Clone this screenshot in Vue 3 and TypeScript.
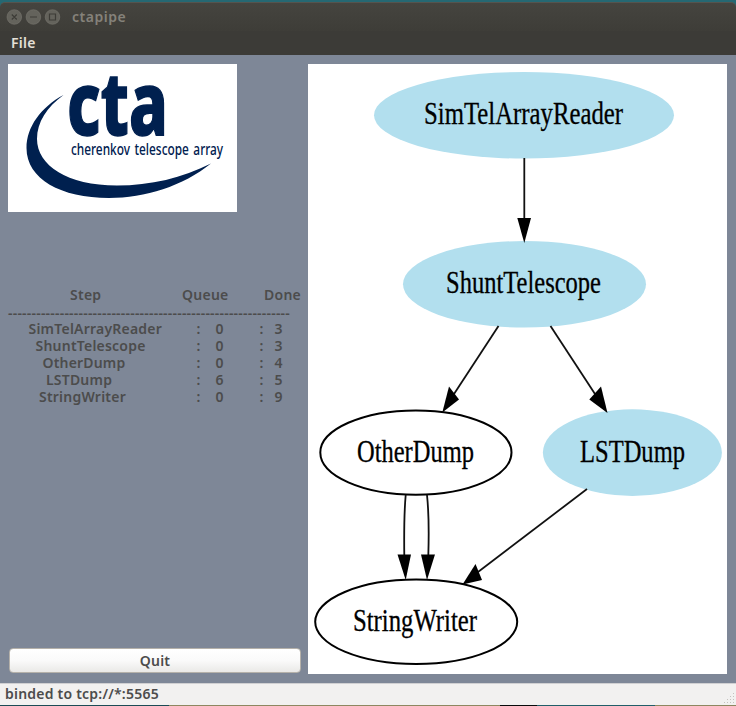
<script setup lang="ts">
interface StepRow {
  name: string
  indent: number
  spacing: number
  queue: number
  done: number
}
interface GraphNode {
  label: string
  cx: number
  cy: number
  rx: number
  x: number
  width: number
  active: boolean
}

const rows: StepRow[] = [
  { name: 'SimTelArrayReader', indent: 20.5, spacing: 0.22, queue: 0, done: 3 },
  { name: 'ShuntTelescope', indent: 27.5, spacing: 0.22, queue: 0, done: 3 },
  { name: 'OtherDump', indent: 34.5, spacing: 0.17, queue: 0, done: 4 },
  { name: 'LSTDump', indent: 38, spacing: 0.2, queue: 6, done: 5 },
  { name: 'StringWriter', indent: 31, spacing: 0.22, queue: 0, done: 9 },
]

const nodes: GraphNode[] = [
  { label: 'SimTelArrayReader', cx: 216, cy: 51.3, rx: 150, x: 116, width: 199, active: true },
  { label: 'ShuntTelescope', cx: 216.5, cy: 220.3, rx: 121.5, x: 138, width: 155, active: true },
  { label: 'OtherDump', cx: 107.9, cy: 388.6, rx: 95.6, x: 49, width: 117, active: false },
  { label: 'LSTDump', cx: 324.4, cy: 388.6, rx: 89.5, x: 272, width: 105, active: true },
  { label: 'StringWriter', cx: 108.2, cy: 557.8, rx: 101, x: 45, width: 124, active: false },
]

const edges: string[] = [
  'M216.3 94V158',
  'M190.5 262L146 330',
  'M242.5 262L287 330',
  'M97.7 431C96 450 96 470 96.3 492',
  'M119 431C121 450 121 470 120.3 492',
  'M279 425L170 508',
]
const heads: string[] = [
  '209.3,154 223,154 216.3,179',
  '141,322.5 151,335.5 134.3,348.5',
  '293,322.5 281.3,335.5 299.5,349',
  '89.5,490.5 103,490.5 97.7,516',
  '113,490.5 127,490.5 119,516',
  '167.5,500 174,516 154.5,520.5',
]
const rule = '-'.repeat(60)
</script>

<template>
  <main class="window">
    <header class="titlebar">
      <svg class="controls" width="56" height="18" viewBox="0 0 56 18">
        <g fill="#64635c" stroke="#77766f" stroke-width=".6">
          <circle cx="8.300" cy="9" r="7.300" /><circle cx="27.400" cy="9" r="7.300" /><circle cx="46.500" cy="9" r="7.300" />
        </g>
        <path d="M5.800 6.500l5 5m0-5l-5 5M24 9h7M43.500 6h6v6h-6z" fill="none" stroke="#3d3c37" stroke-width="1.200" />
      </svg>
      <span class="title">ctapipe</span>
    </header>
    <nav class="menubar"><span class="menu">File</span></nav>

    <section class="body">
      <aside class="side">
        <svg class="logo" width="229" height="148" viewBox="0 0 229 148">
          <path d="M55.500 31C33 43 18.500 63 18.500 84C18.500 115 53 134 101 134C137 134 175 122 203 99.500C174 114 143 121.500 109 121.500C59 121.500 29 101 29 75C29 58 39 43 55.500 31z" fill="#00204f" />
          <text class="brand" x="59" y="71" textLength="101" lengthAdjust="spacingAndGlyphs">cta</text>
          <text class="tagline" x="63" y="91" textLength="152" lengthAdjust="spacingAndGlyphs">cherenkov telescope array</text>
        </svg>

        <div class="table">
          <div class="row head"><span class="h-step">Step</span><span class="h-queue">Queue</span><span>Done</span></div>
          <div class="rule">{{ rule }}</div>
          <div v-for="row in rows" :key="row.name" class="row">
            <span class="name" :style="{ paddingLeft: row.indent + 'px', letterSpacing: row.spacing + 'px' }">{{ row.name }}</span>
            <span class="colon">:</span><span class="queue">{{ row.queue }}</span>
            <span class="colon2">:</span><span>{{ row.done }}</span>
          </div>
        </div>

        <button class="quit" type="button"><span>Quit</span></button>
      </aside>

      <svg class="graph" width="419" height="610" viewBox="0 0 419 610">
        <ellipse
          v-for="n in nodes" :key="n.label" :cx="n.cx" :cy="n.cy" :rx="n.rx" :ry="n.active ? 43.3 : 42.2"
          :class="n.active ? 'active' : 'idle'"
        />
        <path v-for="d in edges" :key="d" :d="d" class="edge" />
        <polygon v-for="p in heads" :key="p" :points="p" />
        <text
          v-for="n in nodes" :key="n.label" class="label" :x="n.x" :y="n.cy + 9"
          :textLength="n.width" lengthAdjust="spacingAndGlyphs"
        >{{ n.label }}</text>
      </svg>
    </section>

    <footer class="status">
      <span class="message">binded to tcp://*:5565</span>
      <svg class="grip" width="12" height="12" viewBox="0 0 12 12">
        <path d="M10 1.500h1M7 4.500h1m2 0h1M4 7.500h1m2 0h1m2 0h1M1 10.500h1m2 0h1m2 0h1m2 0h1" stroke="#c4c2be" fill="none" />
      </svg>
    </footer>
    <div class="desktop"></div>
  </main>
</template>

<style>
body { margin: 0; background: #256873; }
</style>

<style scoped>
.window {
  box-sizing: border-box;
  width: 736px;
  height: 706px;
  padding-top: 2px;
  display: flex;
  flex-direction: column;
  overflow: hidden;
  background: #256873;
  font-family: "Noto Sans", "Open Sans", sans-serif;
  font-size: 14px;
  font-weight: 600;
  color: #4c4c4c;
}
.titlebar {
  height: 29px;
  flex: none;
  box-sizing: border-box;
  display: flex;
  align-items: center;
  gap: 10px;
  padding: 0 0 0 6px;
  border-top: 1px solid #55544e;
  border-radius: 5px 5px 0 0;
  background: linear-gradient(#45443f, #3e3d38);
}
.title { color: #85827a; letter-spacing: .5px; line-height: 20px; }
.menubar { height: 24px; flex: none; background: #3c3b37; }
.menu { display: block; padding-left: 11px; line-height: 24px; letter-spacing: .3px; color: #e5e0d7; }
.body {
  height: 628px;
  flex: none;
  box-sizing: border-box;
  padding: 9px 9px 9px 8px;
  display: flex;
  justify-content: space-between;
  background: #7e8797;
}
.side { width: 293px; display: flex; flex-direction: column; }
.logo { display: block; flex: none; background: #fff; }
.brand { font: 800 87px "Noto Sans", sans-serif; fill: #00204f; stroke: #00204f; stroke-width: 1.5; }
.tagline { font: 500 17px "Noto Sans", sans-serif; fill: #00204f; word-spacing: 2px; }
.table { margin-top: 73px; white-space: pre; }
.row { display: flex; height: 17px; line-height: 17px; }
.head { height: 20px; line-height: 20px; letter-spacing: .25px; }
.h-step { width: 112px; padding-left: 62px; }
.h-queue { width: 82px; }
.rule { height: 15px; line-height: 15px; letter-spacing: .22px; }
.name { box-sizing: border-box; width: 188.5px; }
.colon { width: 19px; }
.queue { width: 44px; }
.colon2 { width: 15px; }
.quit {
  box-sizing: border-box;
  width: 292px;
  height: 25px;
  margin: auto 0 1px 1px;
  padding: 0;
  border: 1px solid #b5b1aa;
  border-radius: 4px;
  background: linear-gradient(#fff, #fafafa 50%, #eae9e7);
  font: inherit;
  letter-spacing: .25px;
  line-height: 20px;
  color: #4c4c4c;
}
.graph { display: block; background: #fff; }
.active { fill: #b2dfee; }
.idle { fill: #fff; stroke: #000; stroke-width: 2; }
.edge { fill: none; stroke: #111; stroke-width: 1.8; }
.label { font: 31px "Liberation Serif", serif; fill: #000; stroke: #000; stroke-width: .3; }
.status {
  height: 22px;
  flex: none;
  box-sizing: border-box;
  display: flex;
  justify-content: space-between;
  align-items: flex-end;
  padding: 0 1px 1px 5px;
  border-top: 1px solid #d0d0d2;
  background: #f2f1f0;
}
.message { line-height: 20px; letter-spacing: .22px; }
.grip { flex: none; }
.desktop { height: 1px; background: linear-gradient(90deg, #1b4b54 0 23%, #8d8760 23% 68%, #080b0b 68% 73%, #215e68 73% 89%, #8d8760 89%); }
</style>
